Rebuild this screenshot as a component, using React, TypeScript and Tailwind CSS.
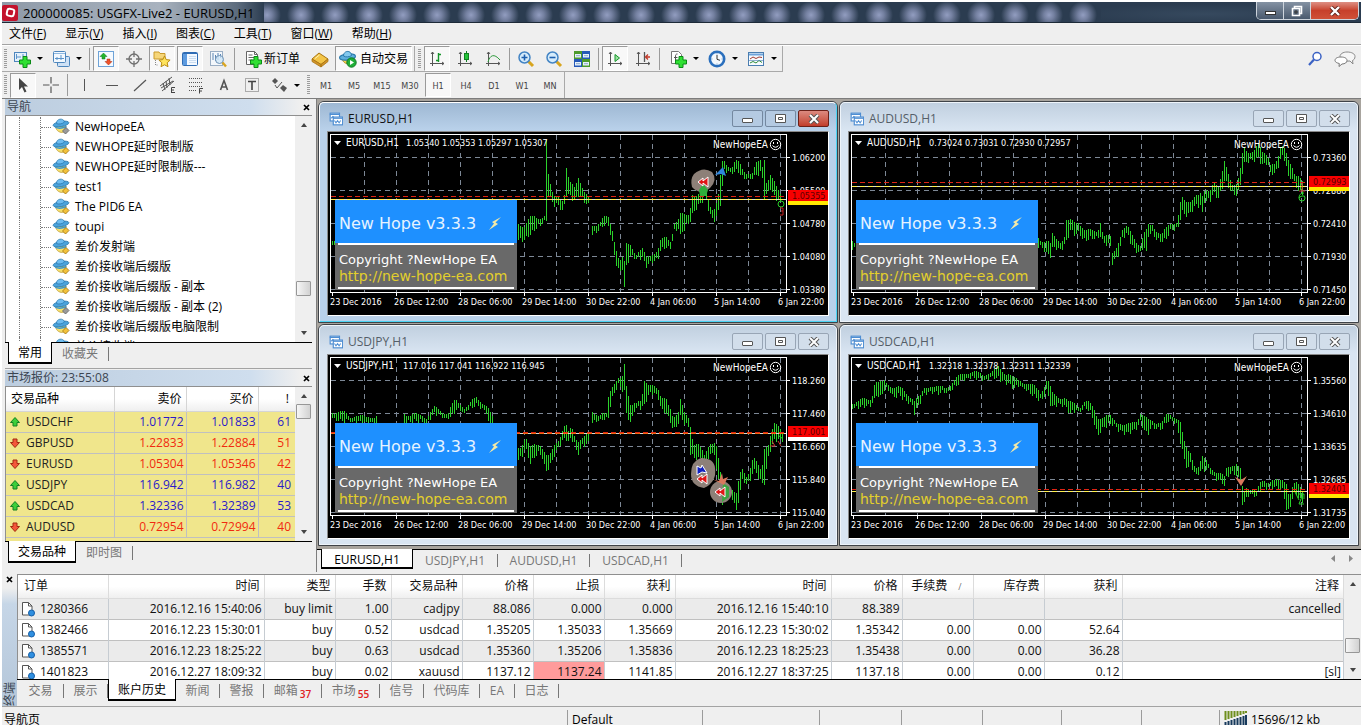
import type { ReactNode } from "react";
import clsx from "clsx";

const UI_FONT = "font-['Open_Sans','Noto_Sans_CJK_SC',sans-serif]";
const CHART_FONT = "DejaVu Sans Condensed, DejaVu Sans, sans-serif";

/* ---------- icons ---------- */

function Icon({ children, size = 18 }: { children: ReactNode; size?: number }) {
  return (
    <svg width={size} height={size} viewBox="0 0 18 18" fill="none" className="shrink-0" aria-hidden="true">
      {children}
    </svg>
  );
}

const plus = (
  <path d="M10 6.500h4V10h3.500v4H14v3.500h-4V14H6.500v-4H10z" fill="#2fe032" stroke="#0b8a16" />
);

const axes = (
  <path d="M4.500 2v14M2 13.500h14M3 4l1.500-2L6 4M14 12l2 1.500-2 1.500" stroke="#555" />
);

const ICONS: Record<string, ReactNode> = {
  newChart: (
    <>
      <rect x="1.500" y="2.500" width="12" height="9" fill="#e4f0fb" stroke="#4e86bd" />
      <path d="M3.500 4v5M3 7h5M10 4v3" stroke="#5a93c9" />
      {plus}
    </>
  ),
  profiles: (
    <>
      <rect x="5.500" y="6.500" width="12" height="10" rx="1" fill="#cfe2f6" stroke="#4e86bd" />
      <rect x="1.500" y="1.500" width="12" height="11" rx="1" fill="#f2f8fe" stroke="#4e86bd" />
      <path d="M2 3.500h11" stroke="#8db7e0" />
      <path d="M3 8.500h9M5 7v3M9 5v5" stroke="#5a93c9" />
    </>
  ),
  market: (
    <>
      <rect x="1.500" y="1.500" width="15" height="15" fill="#f5faff" stroke="#6ea3d8" />
      <path d="M6.500 3L10 6.500H8V9H5V6.500H3z" fill="#23b52c" stroke="#0f7a1a" strokeWidth=".5" />
      <path d="M11.500 15L8 11.500h2V9h3v2.500h2z" fill="#f0522a" stroke="#a92a0c" strokeWidth=".5" />
    </>
  ),
  target: (
    <>
      <circle cx="9" cy="9" r="5" stroke="#707070" strokeWidth="1.300" />
      <path d="M9 1v6M9 11v6M1 9h6M11 9h6" stroke="#707070" strokeWidth="1.300" />
    </>
  ),
  star: (
    <>
      <path d="M1 2h5l1 1.500h5V9H1z" fill="#f6d679" stroke="#c99a2c" />
      <path d="M2.500 10v5H5" stroke="#888" strokeDasharray="1 1" />
      <path d="M11.500 6l1.700 3.600 3.900.5-2.900 2.700.8 3.900-3.500-1.900L8 16.700l.8-3.900-2.900-2.700 3.900-.5z" fill="#ffe45c" stroke="#b98a12" />
    </>
  ),
  list: (
    <>
      <rect x="1.500" y="2.500" width="15" height="13" rx="1" fill="#f4f9ff" stroke="#2f6cb4" />
      <path d="M2 3.500h14" stroke="#2f6cb4" />
      <rect x="2" y="4" width="4" height="11" fill="#5d9be0" />
      <path d="M8 6.500h7M8 8.500h7M8 10.500h7M8 12.500h7" stroke="#c9dcf0" />
    </>
  ),
  tester: (
    <>
      <rect x="1.500" y="1.500" width="12" height="14" fill="#f3f7fb" stroke="#9aaec4" />
      <path d="M4 3v7M6.500 5v6M9 3v7M11.500 4v4" stroke="#5b86b5" />
      <circle cx="10.500" cy="9.500" r="4" fill="#cfe6f8" fillOpacity=".8" stroke="#6f93b6" />
      <path d="M13.500 12.500l3.500 4" stroke="#d9a520" strokeWidth="2.400" />
    </>
  ),
  order: (
    <>
      <path d="M2.500 1.500h8l3 3v10h-11z" fill="#fff" stroke="#666" />
      <path d="M10.500 1.500v3h3M4.500 5h4M4.500 7.500h6M4.500 10h4" stroke="#666" />
      {plus}
    </>
  ),
  gold: (
    <>
      <path d="M1 9l7-6 9 6-7 5.500z" fill="#f3c548" stroke="#a87410" />
      <path d="M1 9v2.500l9 5.500v-2.500zM10 14.500V17l7-5.500V9z" fill="#d2952a" stroke="#a87410" strokeWidth=".8" />
      <path d="M4 8.500l4.500-3.500" stroke="#fff2b0" />
    </>
  ),
  auto: (
    <>
      <path d="M3 7c0 7 8 10 12 1z" fill="#f1d254" stroke="#b78d1c" />
      <ellipse cx="8.500" cy="7" rx="8" ry="3" transform="rotate(-6 8.500 7)" fill="#5fb0de" stroke="#2a7aac" />
      <path d="M4.500 6c0-6 8-6 8-.5-2 1.500-6 2-8 .5z" fill="#83c9ee" stroke="#2a7aac" />
      <circle cx="12.500" cy="12.500" r="4.700" fill="#1fae37" stroke="#0e7a20" />
      <path d="M11 10l4 2.500-4 2.500z" fill="#fff" />
    </>
  ),
  bars: (
    <>
      {axes}
      <path d="M10.500 3v9M10.500 4.500H13M8 10.500h2.500" stroke="#15952a" strokeWidth="1.400" />
    </>
  ),
  candles: (
    <>
      {axes}
      <path d="M10.500 1v11" stroke="#128022" />
      <rect x="8.500" y="3.500" width="4" height="6" fill="#25c53a" stroke="#128022" />
    </>
  ),
  line: (
    <>
      {axes}
      <path d="M4 12C6 5 10 3 16 10" stroke="#2d9a3b" />
    </>
  ),
  zoomIn: (
    <>
      <path d="M11 11l5 5" stroke="#d8a51f" strokeWidth="3" />
      <circle cx="7.500" cy="7.500" r="5.500" fill="#d6ecfb" stroke="#4384c4" strokeWidth="1.500" />
      <path d="M7.500 4.500v6M4.500 7.500h6" stroke="#1d5fae" strokeWidth="1.600" />
    </>
  ),
  zoomOut: (
    <>
      <path d="M11 11l5 5" stroke="#d8a51f" strokeWidth="3" />
      <circle cx="7.500" cy="7.500" r="5.500" fill="#d6ecfb" stroke="#4384c4" strokeWidth="1.500" />
      <path d="M4.500 7.500h6" stroke="#1d5fae" strokeWidth="1.600" />
    </>
  ),
  tile: (
    <>
      <rect x="1" y="1" width="8" height="8" fill="#4d9a2c" />
      <rect x="9" y="1" width="8" height="8" fill="#2659b8" />
      <rect x="1" y="9" width="8" height="8" fill="#2659b8" />
      <rect x="9" y="9" width="8" height="8" fill="#4d9a2c" />
      <path d="M2 4h6v3.500H2zM10 4h6v3.500h-6zM2 12h6v3.500H2zM10 12h6v3.500h-6z" fill="#e8f2fa" />
      <path d="M3 5.700h4M11 5.700h4M3 13.700h4M11 13.700h4" stroke="#8ba8c8" />
    </>
  ),
  scroll: (
    <>
      {axes}
      <path d="M9 4.500l4.500 3.500L9 11.500z" fill="#9be29f" stroke="#15952a" />
    </>
  ),
  shift: (
    <>
      {axes}
      <path d="M10.500 2v10" stroke="#555" strokeWidth="1.300" />
      <path d="M16 7h-4M14 4.500L11.500 7 14 9.500" stroke="#c23a2a" strokeWidth="1.300" />
    </>
  ),
  indicators: (
    <>
      <path d="M2.500 1.500h7l3 3v9h-10z" fill="#fff" stroke="#777" />
      <path d="M8.500 4c-2 0-2 1-2 3v4M5 7.500h3.500" stroke="#555" />
      {plus}
    </>
  ),
  clock: (
    <>
      <circle cx="9" cy="9" r="7.200" fill="#f3f8fd" stroke="#2a6fbd" strokeWidth="2.600" />
      <path d="M9 5v4.300l3 1" stroke="#333" />
      <path d="M9 3.400v1M9 13.600v1M3.400 9h1M13.600 9h1" stroke="#5c8fc9" />
    </>
  ),
  template: (
    <>
      <rect x="1.500" y="2.500" width="15" height="13" fill="#f7fbff" stroke="#4a7db0" />
      <path d="M2 4.500h14" stroke="#6fa4da" strokeWidth="2" />
      <path d="M3 9l3-2 3 1.500 3-1.500 3 .5" stroke="#a03a30" />
      <path d="M3 13l3-1.500 3 1.500 3-2.500 3 2" stroke="#2e8b3a" />
      <path d="M2 10.500h14" stroke="#4a7db0" strokeWidth=".6" />
    </>
  ),
  cursor: <path d="M5 2v12l3-3 2.500 5.500 2-1L10 10.500h4z" fill="#444" />,
  cross: <path d="M9 1v6.500M9 10.500V17M1 9h6.500M10.500 9H17" stroke="#555" strokeWidth="1.200" />,
  vline: <path d="M9.500 3v12" stroke="#555" />,
  hline: <path d="M3 9.500h12" stroke="#555" />,
  trend: <path d="M3 15L15 4" stroke="#555" strokeWidth="1.200" />,
  channel: (
    <>
      <path d="M1 10L13 1M3 15L15 5M4 7l2 7M7 5l1 7M10 2l1 7M2 12l12-7" stroke="#555" />
      <path d="M12.500 17v-5.500H16M12.500 14H15M12.500 16.500H16" stroke="#444" />
    </>
  ),
  fibo: (
    <>
      <path d="M2 2.500h14M2 6.500h14M2 10.500h14M2 14.500h8" stroke="#555" strokeDasharray="1 1" />
      <path d="M12.500 17.500v-5H16M12.500 15H15" stroke="#444" />
    </>
  ),
  letterA: <path d="M5.500 14L9 4.500l3.500 9.500M6.800 11h4.400" stroke="#555" strokeWidth="1.600" />,
  label: (
    <>
      <rect x="2.500" y="2.500" width="13" height="13" stroke="#666" strokeDasharray="1 1" />
      <path d="M5 5.500h8M9 5.500V14" stroke="#444" strokeWidth="1.600" />
    </>
  ),
  arrows: (
    <>
      <path d="M2 5l3-3 3 3-3 3z" fill="#555" />
      <path d="M10 12l3-3 4 3-3 4z" fill="#555" />
      <path d="M5 9l2 3 5-6" stroke="#555" />
    </>
  ),
};

function Expert({ off }: { off?: boolean }) {
  return (
    <Icon>
      <path d="M3.500 8.500C4 13 8.500 15.500 12 14l2-6z" fill="#f5e06c" stroke="#c0a03c" strokeWidth=".8" />
      <ellipse cx="9" cy="6" rx="8" ry="2.600" transform="rotate(-10 9 6)" fill="#4ba3dc" stroke="#2b7bb0" strokeWidth=".8" />
      <path d="M4.500 5.500C4 .5 11.500-.5 12.500 4c-2 2-6 2.500-8 1.500z" fill="#6fbdf0" stroke="#2b7bb0" strokeWidth=".8" />
      <path d="M3 9c3 1.800 7 1.500 11.500-.5" stroke="#3f97cc" strokeWidth="1.400" />
      <path d="M14 9.500l3 3-3.500 3.500-3-3z" fill={off ? "#9a9a9a" : "#f2c23c"} stroke={off ? "#666" : "#a87a14"} strokeWidth=".9" />
    </Icon>
  );
}

function ChartGlyph() {
  return (
    <Icon size={14}>
      <rect x="1.500" y="1.500" width="12" height="10" fill="#fff" stroke="#4f8ed2" strokeWidth="1.500" />
      <path d="M1 3h13M3 8l2-2 2 2" stroke="#4f8ed2" strokeWidth="1.600" />
      <rect x="5.500" y="6.500" width="12" height="10" fill="#fff" stroke="#4f8ed2" strokeWidth="1.500" />
      <path d="M5 8h12" stroke="#4f8ed2" strokeWidth="1.600" />
      <path d="M7 11l2 3 2-3 2 3 2-3" stroke="#4f8ed2" strokeWidth="1.300" />
    </Icon>
  );
}

/* ---------- toolbars ---------- */

function Grip() {
  return (
    <span className="mx-[2px] h-[20px] w-[3px] shrink-0 bg-[repeating-linear-gradient(180deg,#9c9c9c_0_1px,#efefef_1px_2px)]" />
  );
}

function Sep() {
  return <span className="mx-[2px] h-[22px] w-px shrink-0 bg-[#9b9b9b]" />;
}

type ToolProps = { icon: string; label: string; pressed?: boolean; caret?: boolean };

function Tool({ icon, label, pressed, caret }: ToolProps) {
  return (
    <button
      aria-label={label}
      className={clsx(
        "flex h-[25px] shrink-0 items-center",
        caret ? "w-[39px] justify-between pl-1 pr-[5px]" : "mx-px w-[26px] justify-center",
        pressed && "border border-b-white border-l-[#9a9a9a] border-r-white border-t-[#9a9a9a] bg-[#f8f8f8]"
      )}
    >
      <Icon>{ICONS[icon]}</Icon>
      {caret && <Caret />}
    </button>
  );
}

function Caret() {
  return (
    <svg width="6" height="3" viewBox="0 0 6 3" aria-hidden="true">
      <path d="M0 0h6L3 3z" fill="#000" />
    </svg>
  );
}

const MENUS = [
  ["文件", "F"],
  ["显示", "V"],
  ["插入", "I"],
  ["图表", "C"],
  ["工具", "T"],
  ["窗口", "W"],
  ["帮助", "H"],
];

const PERIODS = ["M1", "M5", "M15", "M30", "H1", "H4", "D1", "W1", "MN"];

function TitleBar() {
  return (
    <header className="flex h-[21px] shrink-0 border-b border-[#1d2a38] bg-[#2b3c50]">
      <div className="flex w-[262px] shrink-0 items-center gap-[5px] bg-[linear-gradient(90deg,#8e9aa8,#a9b3bf_60%,#5c6b7d_90%,#2b3c50)] pt-px">
        <span className="flex size-[16px] items-center justify-center rounded-[2px] bg-[#c3122c]">
          <span className="size-[9px] rotate-12 rounded-[3px] border-2 border-white" />
        </span>
        <h1 className="whitespace-nowrap text-[13px] leading-4 text-black">200000085: USGFX-Live2 - EURUSD,H1</h1>
      </div>
      <div className="flex-1 bg-[radial-gradient(circle_at_17px_13px,#929dc0_0,#7480a0_5px,#2b3c50_14px)] bg-[length:34px_21px] bg-[position:-14px_0px]" />
      <div className="flex w-[260px] justify-end bg-[radial-gradient(ellipse_at_40%_60%,#36495e,#2b3c50_60%)] pr-[2px]">
        <div className="flex h-[18px] overflow-hidden rounded-b-[5px] border border-t-0 border-[#cdd4dc]">
          <button aria-label="最小化" className="flex w-[27px] items-center justify-center border-r border-[#cdd4dc] bg-linear-to-b from-[#8492a3] to-[#4a5a6e]">
            <span className="mt-1 h-[4px] w-[11px] border border-[#333] bg-white" />
          </button>
          <button aria-label="还原" className="flex w-[27px] items-center justify-center border-r border-[#cdd4dc] bg-linear-to-b from-[#8492a3] to-[#4a5a6e]">
            <svg width="12" height="12" viewBox="0 0 12 12" fill="none" aria-hidden="true">
              <path d="M3.500 3V1.500h7v7H9M1.500 3.500h7v7h-7z" stroke="#fff" strokeWidth="1.600" />
              <path d="M4 6h2v2H4z" stroke="#333" />
            </svg>
          </button>
          <button aria-label="关闭" className="flex w-[47px] items-center justify-center bg-linear-to-b from-[#dd8f84] via-[#c7402b] to-[#cf5138]">
            <svg width="12" height="10" viewBox="0 0 12 10" aria-hidden="true">
              <path d="M2 1l8 8M10 1L2 9" stroke="#5b2018" strokeWidth="4" />
              <path d="M2 1l8 8M10 1L2 9" stroke="#fff" strokeWidth="2.400" />
            </svg>
          </button>
        </div>
      </div>
    </header>
  );
}

function Toolbars() {
  return (
    <div className="shrink-0">
      <nav className="flex h-[22px] items-center border-b border-[#a3a3a3] pl-[7px]">
        {MENUS.map(([name, key]) => (
          <button key={key} className="mr-[19px] whitespace-nowrap text-[12px] leading-4">
            {name}(<u>{key}</u>)
          </button>
        ))}
      </nav>
      <div className="flex justify-between border-t border-white">
        <div className="flex h-[26px] items-center border-b border-r border-[#a9a9a9]">
          <Grip />
          <Tool icon="newChart" label="新图表" caret />
          <Tool icon="profiles" label="配置文件" caret />
          <Sep />
          <Tool icon="market" label="市场报价" pressed />
          <Tool icon="target" label="数据窗口" />
          <Tool icon="star" label="导航" pressed />
          <Tool icon="list" label="终端" pressed />
          <Tool icon="tester" label="策略测试" />
          <Sep />
          <button className="flex w-[69px] items-center gap-[2px] whitespace-nowrap pl-[7px] text-[12px]">
            <Icon>{ICONS.order}</Icon>新订单
          </button>
          <Tool icon="gold" label="MetaEditor" />
          <button className="mx-px flex h-[25px] w-[77px] items-center gap-[3px] whitespace-nowrap border border-b-white border-l-[#9a9a9a] border-r-white border-t-[#9a9a9a] bg-[#f8f8f8] pl-[3px] text-[12px]">
            <Icon>{ICONS.auto}</Icon>自动交易
          </button>
          <span className="mx-px h-full w-px bg-[#a9a9a9]" />
          <Grip />
          <Tool icon="bars" label="柱状图" pressed />
          <Tool icon="candles" label="蜡烛图" />
          <Tool icon="line" label="折线图" />
          <Sep />
          <Tool icon="zoomIn" label="放大" />
          <Tool icon="zoomOut" label="缩小" />
          <Tool icon="tile" label="平铺窗口" />
          <Sep />
          <Tool icon="scroll" label="自动滚动" pressed />
          <Tool icon="shift" label="图表平移" />
          <Sep />
          <div className="flex pl-[3px]">
            <Tool icon="indicators" label="指标" caret />
            <Tool icon="clock" label="周期" caret />
            <Tool icon="template" label="模板" caret />
          </div>
        </div>
        <div className="flex items-center gap-[11px] pr-[5px]">
          <button aria-label="搜索">
            <svg width="16" height="16" viewBox="0 0 16 16" fill="none" aria-hidden="true">
              <circle cx="10" cy="5.500" r="4" fill="#fff" stroke="#3b62c4" strokeWidth="1.500" />
              <path d="M7 8.500L2 14" stroke="#3b62c4" strokeWidth="2.200" />
            </svg>
          </button>
          <button aria-label="聊天">
            <svg width="22" height="16" viewBox="0 0 22 16" fill="none" aria-hidden="true">
              <path d="M13 1c5 0 8 2 8 4.500S19.500 9 18.500 9.500L19 13l-3-3c-6 .5-10-1-10-4.500C6 3 9 1 13 1z" fill="#f6f6f6" stroke="#8a8a8a" />
              <path d="M7 6c4 0 6 1.500 6 3.500S11 13 8 13l-3 2.500.3-3C3 12 1 11 1 9.500 1 7.500 3 6 7 6z" fill="#fff" stroke="#777" />
            </svg>
          </button>
        </div>
      </div>
      <div className="flex border-b border-[#7d7d7d]">
        <div className="flex h-[26px] items-center border-r border-[#a9a9a9]">
          <Grip />
          <Tool icon="cursor" label="光标" pressed />
          <Tool icon="cross" label="十字准线" />
          <Sep />
          <Tool icon="vline" label="垂直线" />
          <Tool icon="hline" label="水平线" />
          <Tool icon="trend" label="趋势线" />
          <Tool icon="channel" label="通道" />
          <Tool icon="fibo" label="斐波那契" />
          <Tool icon="letterA" label="文字" />
          <Tool icon="label" label="文字标签" />
          <Tool icon="arrows" label="箭头" caret />
          <Grip />
          {PERIODS.map((p) => (
            <button
              key={p}
              className={clsx(
                "mx-px h-[24px] w-[26px] pt-[3px] font-['DejaVu_Sans_Condensed','DejaVu_Sans',sans-serif] text-[9px] text-[#444]",
                p === "H1" && "border border-b-white border-l-[#9a9a9a] border-r-white border-t-[#9a9a9a] bg-[#f8f8f8]"
              )}
            >
              {p}
            </button>
          ))}
        </div>
      </div>
    </div>
  );
}

/* ---------- shared panel parts ---------- */

function ScrollBar({ before, after }: { before: string; after: string }) {
  return (
    <div className="flex w-[17px] shrink-0 flex-col items-center bg-[#efefef] py-[7px]">
      <svg width="6" height="4" viewBox="0 0 6 4" aria-hidden="true">
        <path d="M3 0l3 4H0z" fill="#444" />
      </svg>
      <span className={before} />
      <span className="h-[15px] w-[15px] shrink-0 rounded-[1px] border border-[#979797] bg-linear-to-r from-[#f6f6f6] to-[#d2d2d2]" />
      <span className={after} />
      <svg width="6" height="4" viewBox="0 0 6 4" aria-hidden="true">
        <path d="M0 0h6L3 4z" fill="#444" />
      </svg>
    </div>
  );
}

function PanelTitle({ children }: { children: ReactNode }) {
  return (
    <div className="flex h-[16px] shrink-0 items-center justify-between bg-[linear-gradient(90deg,#bccddf,#cfdeee_80%,#efefef_96%)] pl-[2px] pr-[2px] leading-4 text-[#3c4652]">
      <span className="text-[12px]">{children}</span>
      <button aria-label="关闭">
        <svg width="7" height="7" viewBox="0 0 7 7" aria-hidden="true">
          <path d="M1 1l5 5M6 1L1 6" stroke="#000" strokeWidth="1.700" />
        </svg>
      </button>
    </div>
  );
}

function PanelTabs({ tabs }: { tabs: string[] }) {
  return (
    <div className="flex h-[25px] shrink-0 items-start border-t border-black pl-[3px] text-[12px]">
      {tabs.map((t, i) =>
        i === 0 ? (
          <button key={t} className="-mt-px h-[22px] border-x border-b-2 border-black bg-white px-[9px] pt-[2px]">
            {t}
          </button>
        ) : (
          <button key={t} className="mt-[4px] h-[14px] border-r border-[#777] px-[10px] leading-3 text-[#777]">
            {t}
          </button>
        )
      )}
    </div>
  );
}

/* ---------- left column ---------- */

const EXPERTS = [
  { name: "NewHopeEA", off: true },
  { name: "NEWHOPE延时限制版" },
  { name: "NEWHOPE延时限制版---" },
  { name: "test1" },
  { name: "The PID6 EA" },
  { name: "toupi" },
  { name: "差价发射端" },
  { name: "差价接收端后缀版" },
  { name: "差价接收端后缀版 - 副本" },
  { name: "差价接收端后缀版 - 副本 (2)", off: true },
  { name: "差价接收端后缀版电脑限制" },
  { name: "差价接收端" },
];

function Navigator() {
  return (
    <section className="mb-px flex h-[268px] shrink-0 flex-col">
      <PanelTitle>导航</PanelTitle>
      <div className="flex min-h-0 flex-1 border-l border-t border-[#8f8f8f] bg-white">
        <ul className="flex-1 overflow-hidden pt-px">
          {EXPERTS.map(({ name, off }) => (
            <li key={name} className="flex h-[20px] items-center whitespace-nowrap text-[12px] leading-5 text-black">
              <span className="ml-[13px] h-full w-[21px] border-l border-dotted border-[#777]" />
              <span className="flex h-full w-[12px] items-center border-l border-dotted border-[#777]">
                <span className="w-[10px] border-t border-dotted border-[#777]" />
              </span>
              <Expert off={off} />
              <span className="ml-[5px]">{name}</span>
            </li>
          ))}
        </ul>
        <ScrollBar before="flex-[155]" after="flex-[35]" />
      </div>
      <PanelTabs tabs={["常用", "收藏夹"]} />
    </section>
  );
}

const QUOTES = [
  { symbol: "USDCHF", bid: "1.01772", ask: "1.01833", spread: 61, up: true },
  { symbol: "GBPUSD", bid: "1.22833", ask: "1.22884", spread: 51, up: false },
  { symbol: "EURUSD", bid: "1.05304", ask: "1.05346", spread: 42, up: false },
  { symbol: "USDJPY", bid: "116.942", ask: "116.982", spread: 40, up: true },
  { symbol: "USDCAD", bid: "1.32336", ask: "1.32389", spread: 53, up: true },
  { symbol: "AUDUSD", bid: "0.72954", ask: "0.72994", spread: 40, up: false },
];

function MarketWatch() {
  return (
    <section className="flex min-h-0 flex-1 flex-col border-t border-[#a3a3a3] pt-px">
      <PanelTitle>市场报价: 23:55:08</PanelTitle>
      <div className="flex h-[155px] shrink-0 border-l border-t border-[#8f8f8f]">
        <div className="flex-1 overflow-hidden bg-[#f0e68c]">
          <table className="w-full table-fixed border-collapse text-right text-[12px] leading-4">
            <thead>
              <tr className="h-[24px] bg-linear-to-b from-white from-50% to-[#efefef]">
                <th className="w-[108px] border-b border-r border-[#d5d5d5] pl-[5px] text-left font-normal">交易品种</th>
                <th className="w-[72px] border-b border-r border-[#d5d5d5] pr-1 font-normal">卖价</th>
                <th className="w-[72px] border-b border-r border-[#d5d5d5] pr-1 font-normal">买价</th>
                <th className="border-b border-[#d5d5d5] pr-[6px] font-normal">!</th>
              </tr>
            </thead>
            <tbody>
              {QUOTES.map((q) => (
                <tr key={q.symbol} className={clsx("h-[21px] border-b border-[#c0c0c0]", q.up ? "text-[#2a1ac8]" : "text-[#f02a10]")}>
                  <td className="border-r border-[#c0c0c0] pl-[4px] text-left text-[#222]">
                    <span className="flex items-center gap-[6px]">
                      <svg width="10" height="10" viewBox="0 0 10 10" aria-hidden="true">
                        {q.up ? (
                          <path d="M5 .5L9.500 5.500H7v3.500H3V5.500H.5z" fill="#3ccf3a" stroke="#128022" />
                        ) : (
                          <path d="M5 9.500L.5 4.500H3V1h4v3.500h2.500z" fill="#f4573a" stroke="#a32a10" />
                        )}
                      </svg>
                      {q.symbol}
                    </span>
                  </td>
                  <td className="border-r border-[#c0c0c0] pr-[2px]">{q.bid}</td>
                  <td className="border-r border-[#c0c0c0] pr-[2px]">{q.ask}</td>
                  <td className="pr-[4px]">{q.spread}</td>
                </tr>
              ))}
            </tbody>
          </table>
        </div>
        <ScrollBar before="h-[6px]" after="flex-1" />
      </div>
      <PanelTabs tabs={["交易品种", "即时图"]} />
    </section>
  );
}

/* ---------- charts ---------- */

// "x high low" triples, "|" starts a new run after a gap
const EURUSD =
  "2 106 112 6 107 110|190 91 108 196 94 108 201 86 103 208 85 96 216 84 89 218 9 89 220 44 63 223 59 69 226 64 73 230 63 73 234 68 79 236 63 73 238 38 63 241 51 63 246 54 69 250 44 63 254 56 66 257 63 71 261 68 74|264 94 103 269 91 99 275 86 93 280 86 93 284 98 111 287 113 129 291 129 141 294 126 136 296 131 157 298 113 133 303 113 123 307 121 126 314 118 126 318 126 134 324 121 129 329 119 128 332 109 119 337 106 115 342 108 116 346 91 99 350 88 96 352 83 104 358 83 93 361 81 91 364 61 83 369 66 74 373 59 71 377 49 63 381 71 81 385 79 89 389 69 84 391 59 76 393 31 68 395 28 39 399 33 39 404 34 41 407 29 38 411 31 41 415 39 46 424 41 46 427 33 44 432 29 41 434 34 46 436 26 66 438 49 63 442 43 56 445 49 63 449 58 68 453 63 70";
const AUDUSD =
  "3 107 116 5 109 116|189 106 114 194 108 116 198 109 123 201 113 124 203 103 116 208 108 116 211 109 118 215 104 113 217 88 109 221 89 98 226 91 103 229 89 101 236 99 109 241 99 106 248 99 106 251 89 104 254 104 111 261 106 114 263 121 131 266 116 128 269 109 123 273 98 106 278 95 101 282 101 113 286 108 118 291 113 121 294 104 114 297 99 121 299 93 103 303 92 101 308 99 108 312 103 109 316 98 108 321 91 99 328 89 96 330 76 93 332 65 79 336 71 83 341 69 81 346 62 73 351 63 74 353 66 81 355 61 69 361 56 68 364 49 61 369 56 66 373 41 56 375 30 48 378 38 53 383 51 61 388 53 63 391 38 53 394 14 33 398 19 29 404 19 28 409 13 26 413 21 33 418 21 31 421 31 41 426 33 41 429 26 34 432 13 24 436 16 28 439 26 46 443 36 46 446 46 54 449 46 58 453 48 62";
const USDJPY =
  "4 56 62 8 57 65 15 58 66 23 61 65 35 62 68 41 61 68 48 62 69|76 59 68 85 59 66 91 61 66 98 62 68 103 55 62 106 52 58 111 57 61 120 57 62 123 50 62 127 46 55 131 50 55 136 52 57 141 48 53 148 44 50 153 46 52 158 50 57 160 53 68 165 65 69|188 93 107 193 90 102 197 82 93 202 93 108 206 90 102 211 88 97 215 93 105 217 100 117 221 102 112 225 92 102 228 87 97 231 82 90 235 72 85 237 69 82 240 78 87 243 73 83 246 80 88 249 85 100 253 83 92 260 80 88|264 57 68 266 58 67 271 59 64 278 60 64 280 43 62 283 33 45 287 25 35 290 22 30 293 23 33 294 22 35 296 11 37 298 33 58 302 50 68 306 46 55 310 46 52 313 48 53 316 28 50 320 30 40 325 28 37 330 35 43 333 45 55 338 45 58 342 52 67 345 62 75 350 58 68 352 46 62 356 58 68 360 62 72 362 70 98 365 88 103 371 92 103 376 100 108 381 87 100 386 88 98 388 92 115 391 112 132 394 132 150 398 128 138 403 132 142 406 138 147 408 140 157 411 122 142 413 113 125 418 120 128 421 115 128 425 102 115 428 108 118 433 117 128 436 92 128 440 88 102 443 78 92 446 70 85 450 72 85 455 77 85";
const USDCAD =
  "3 47 52 11 45 52 16 45 51 22 44 50 25 28 45 27 26 40 31 28 42 36 27 33 41 30 37 44 32 43 49 32 40 56 38 45 62 41 48 65 45 58 71 42 47 74 34 40 81 30 36 89 33 38 96 32 37 104 27 33 111 20 27 116 17 23 122 17 22 131 19 24 139 18 23 144 17 22 149 12 23 154 17 27 159 18 28 163 23 33 171 25 30 177 28 35 186 33 42 191 37 45 194 32 43 197 26 35 200 27 45 202 38 52 209 42 49 216 42 51 220 48 58 226 49 55 231 51 55 236 46 52 241 50 57 244 53 65 248 62 80 254 62 73 262 62 68 269 67 75 276 72 78 282 68 77 287 65 73 291 58 67 294 62 73 298 65 80 302 65 72 312 68 74 317 61 67 322 59 65 327 62 68 331 68 87 334 85 100 338 95 115 341 97 108 346 112 121 349 112 118 353 103 115 359 108 115 366 117 123 375 122 130 377 113 123 382 109 117 387 110 120 391 115 128 393 132 148 394 138 152 397 132 142 402 133 138 407 137 142 412 127 133 422 125 132 429 127 133 434 125 135 437 127 155 440 142 157 442 133 145 446 128 137 451 133 145 454 136 148";

const DATES = [
  "23 Dec 2016",
  "26 Dec 12:00",
  "28 Dec 06:00",
  "29 Dec 14:00",
  "30 Dec 22:00",
  "4 Jan 06:00",
  "5 Jan 14:00",
  "6 Jan 22:00",
];

function barsPath(data: string) {
  let d = "";
  for (const run of data.split("|")) {
    const n = run.split(" ").map(Number);
    const pts: number[][] = [];
    for (let i = 0; i < n.length; i += 3) pts.push(n.slice(i, i + 3));
    let k = 0;
    for (let x = pts[0][0]; x <= pts[pts.length - 1][0]; x += 2) {
      while (k < pts.length - 2 && pts[k + 1][0] <= x) k++;
      const [x0, h0, l0] = pts[k];
      const [x1, h1, l1] = pts[k + 1];
      const t = Math.min(1, (x - x0) / (x1 - x0));
      const wobble = Math.round(Math.sin(x * 12.9) * 2);
      const high = Math.round(h0 + (h1 - h0) * t) + wobble;
      const low = Math.max(high + 4, Math.round(l0 + (l1 - l0) * t) - Math.round(Math.cos(x * 7.3) * 2));
      d += `M${x + 0.5} ${high}V${low}`;
    }
  }
  return d;
}

type Chart = {
  symbol: string;
  ohlc: string;
  ohlcX: number;
  prices: string[];
  bars: string;
  ask: number;
  bid: number;
  price: string;
  boxY: number;
  under: string;
  active?: boolean;
  marks?: ReactNode;
};

const sellMark = (x: number, y: number) => (
  <path d={`M${x - 5} ${y}l5-4v3l5-4v10l-5-4v3z`} fill="#e01515" stroke="#fff" />
);

const CHARTS: Chart[] = [
  {
    symbol: "EURUSD,H1",
    ohlc: "1.05340 1.05353 1.05297 1.05307",
    ohlcX: 78,
    prices: ["1.06200", "1.05500", "1.04780", "1.04080", "1.03380"],
    bars: EURUSD,
    ask: 64,
    bid: 67,
    price: "1.05355",
    boxY: 58,
    under: "#ffe800",
    active: true,
    marks: (
      <>
        <path d="M366 42q9-8 18-2 6 8-2 16-10 8-18-1-2-8 2-13z" fill="#8d8078" />
        <path d="M371 58l4-6 5 6-2 6h-6z" fill="#2fae3c" />
        {sellMark(375, 50)}
        <path d="M387 43l8-8 3 9-5-2z" fill="#2f86dc" />
        <circle cx="453" cy="72" r="3" stroke="#28d028" fill="none" />
        <path d="M452 76h3v3h-2M455 79v4h-3" stroke="#c02020" fill="none" />
      </>
    ),
  },
  {
    symbol: "AUDUSD,H1",
    ohlc: "0.73024 0.73031 0.72930 0.72957",
    ohlcX: 80,
    prices: ["0.73360", "0.72880", "0.72410", "0.71930", "0.71450"],
    bars: AUDUSD,
    ask: 50,
    bid: 54,
    price: "0.72993",
    boxY: 44,
    under: "#ffe800",
    marks: (
      <>
        <path d="M453 51v8M450 59h6" stroke="#d03030" />
        <path d="M455 61q-5 0-5 5 0 3 3 3t3-3-3-2-3 2" stroke="#28d028" fill="none" />
      </>
    ),
  },
  {
    symbol: "USDJPY,H1",
    ohlc: "117.016 117.041 116.922 116.945",
    ohlcX: 75,
    prices: ["118.260", "117.460", "116.660", "115.840", "115.040"],
    bars: USDJPY,
    ask: 77,
    bid: 78,
    price: "117.001",
    boxY: 71,
    under: "#ffffff",
    marks: (
      <>
        <path d="M373 103q13 0 14 10 2 14-11 20-13-2-13-14 0-13 10-16z" fill="#8d8078" />
        <circle cx="393" cy="137" r="11" fill="#8d8078" />
        <path d="M395 128l6 4v10l-7 5z" fill="#3aa540" />
        <path d="M369 111l4 2 1-3 5 8-5-1-5 3z" fill="#1020c0" stroke="#fff" />
        {sellMark(374, 124)}
        {sellMark(392, 137)}
        <path d="M386 125l5 1 3-8 1 6 5-2-4 8z" fill="#d9785c" />
        <path d="M444 86l3 5h-5M450 86l3 5" stroke="#d03030" fill="none" />
        <path d="M450 80l5 4" stroke="#28d028" />
      </>
    ),
  },
  {
    symbol: "USDCAD,H1",
    ohlc: "1.32318 1.32378 1.32311 1.32339",
    ohlcX: 80,
    prices: ["1.35560", "1.34610", "1.33635", "1.32685", "1.31735"],
    bars: USDCAD,
    ask: 134,
    bid: 136,
    price: "1.32401",
    boxY: 128,
    under: "#ffe800",
    marks: (
      <>
        <path d="M386 122l6 3 6-4-6 10z" fill="#d9785c" />
        <path d="M446 137l4 8M450 139h5v5M454 139l-4 10h5" stroke="#28d028" fill="none" />
      </>
    ),
  },
];

function Plot({ chart }: { chart: Chart }) {
  const cols = Array.from({ length: 15 }, (_, i) => 4 + i * 32);
  const rows = [25, 58, 91, 124, 157];
  return (
    <svg width="501" height="181" viewBox="0 0 501 181" fontFamily={CHART_FONT} fontSize="9" fill="#fff" shapeRendering="crispEdges">
      <g stroke="#7d8896" strokeDasharray="5 4" fill="none">
        {cols.slice(1).map((x) => (
          <path key={x} d={`M${x + 0.5} 3V160`} />
        ))}
        {rows.map((y) => (
          <path key={y} d={`M3 ${y + 0.5}H458`} />
        ))}
      </g>
      <path d={barsPath(chart.bars)} stroke="#2bd22b" fill="none" />
      <path d={`M3 ${chart.ask + 0.5}H458`} stroke="#e02414" strokeDasharray="5 3" />
      <path d={`M3 ${chart.bid + 0.5}H458`} stroke="#d8d8d8" />
      <path d={`M3 ${chart.bid + 0.5}H458`} stroke={chart.under === "#ffffff" ? "#f06a10" : "#fff04a"} strokeDasharray="5 3" />
      <g shapeRendering="auto">{chart.marks}</g>
      <rect x="2.500" y="2.500" width="456" height="158" fill="none" stroke="#fff" />
      <path d={cols.filter((_, i) => i % 2 === 0).map((x) => `M${x + 0.5} 160v4`).join("")} stroke="#fff" />
      <path d={rows.map((y) => `M458 ${y + 0.5}h4`).join("")} stroke="#fff" />
      <path d="M6 9h7l-3.500 4z" shapeRendering="auto" />
      <text x="18" y="14" fontSize="10">{chart.symbol}</text>
      <text x={chart.ohlcX} y="14">{chart.ohlc}</text>
      <text x="440" y="16" fontSize="10" textAnchor="end">NewHopeEA</text>
      <g fill="none" stroke="#fff" shapeRendering="auto">
        <circle cx="447.500" cy="12.500" r="5.200" />
        <path d="M444.500 13.500q3 3.500 6 0M445.500 10v2M449.500 10v2" />
      </g>
      {chart.prices.map((p, i) => (
        <text key={p} x="464" y={rows[i] + 4}>
          {p}
        </text>
      ))}
      {DATES.map((d, i) => (
        <text key={d} x={2 + i * 64} y="173">
          {d}
        </text>
      ))}
      <rect x="460" y={chart.boxY} width="41" height="15" fill={chart.under} />
      <rect x="460" y={chart.boxY} width="41" height="11" fill="#f80000" />
      <text x="464" y={chart.boxY + 9} fill="#5a0000">
        {chart.price}
      </text>
    </svg>
  );
}

function ChartWindow({ chart }: { chart: Chart }) {
  const { active } = chart;
  const box = "flex h-[17px] w-[31px] items-center justify-center rounded-[2px] border";
  const boxTone = active ? "border-[#7488a0] bg-[#b4cae2]" : "border-[#98a5b5] bg-[#d2deeb]";
  return (
    <article
      className={clsx(
        "flex min-w-0 flex-col rounded-t-[6px] border border-[#3f4348]",
        active ? "bg-[linear-gradient(180deg,#9db7d2,#b9d1ea_28px)]" : "bg-[linear-gradient(180deg,#c0cfdf,#d9e5f2_28px)]"
      )}
    >
      <div className={clsx("flex flex-1 flex-col rounded-t-[5px] border px-[7px] pb-[5px]", active ? "border-b-[#4cd4f4] border-l-white border-r-[#4cd4f4] border-t-white" : "border-[#eef4fa]")}>
        <div className="flex h-[28px] items-center justify-between pl-[2px] pt-[3px]">
          <h2 className={clsx("flex items-center gap-[5px] text-[12px] leading-4", active ? "text-[#111]" : "text-[#555e68]")}>
            <ChartGlyph />
            {chart.symbol}
          </h2>
          <div className="flex gap-[2px]">
            <button aria-label="最小化" className={clsx(box, boxTone)}>
              <span className="mt-[3px] h-[5px] w-[11px] rounded-[1px] border border-[#555] bg-white" />
            </button>
            <button aria-label="最大化" className={clsx(box, boxTone)}>
              <svg width="11" height="9" viewBox="0 0 11 9" fill="none" aria-hidden="true">
                <path d="M.5.500h10v8H.5z" fill="#fff" stroke="#555" />
                <path d="M3.500 3.500h4v2h-4z" stroke="#555" />
              </svg>
            </button>
            <button aria-label="关闭" className={clsx(box, active ? "border-[#6b2018] bg-linear-to-b from-[#dc8a80] to-[#c13c2a]" : boxTone)}>
              <svg width="12" height="10" viewBox="0 0 12 10" aria-hidden="true">
                <path d="M2 1l8 8M10 1L2 9" stroke="#555" strokeWidth="4" />
                <path d="M2 1l8 8M10 1L2 9" stroke="#fff" strokeWidth="2" />
              </svg>
            </button>
          </div>
        </div>
        <div className="relative flex-1 overflow-hidden border border-b-white border-l-[#8a8a8a] border-r-white border-t-[#8a8a8a] bg-black">
          <Plot chart={chart} />
          <div className="absolute left-[7px] top-[68px] w-[182px] bg-[#696969] font-['DejaVu_Sans',sans-serif] text-white">
            <div className="flex h-[43px] items-center gap-[12px] bg-[#1e90ff] pl-[4px] pt-[4px] text-[16px] leading-5">
              <span className="whitespace-nowrap text-[#e6f3ff]">New Hope v3.3.3</span>
              <svg width="14" height="13" viewBox="0 0 14 13" aria-hidden="true">
                <path d="M13 0L4 5l2 1.500L1 13l9-6-2.500-1.500z" fill="#f3e9a8" />
              </svg>
            </div>
            <div className="mx-[3px] border-y-2 border-white pb-[2px] pt-[6px] leading-[17px]">
              <p className="whitespace-nowrap pl-px text-[13px]">Copyright ?NewHope EA</p>
              <p className="whitespace-nowrap pl-px text-[14px] text-[#e3cf2c]">http://new-hope-ea.com</p>
            </div>
            <div className="h-px" />
          </div>
        </div>
      </div>
    </article>
  );
}

const WINDOW_TABS = [
  { symbol: "USDJPY,H1", width: "w-[85px]" },
  { symbol: "AUDUSD,H1", width: "w-[92px]" },
  { symbol: "USDCAD,H1", width: "w-[92px]" },
];

function Workspace() {
  return (
    <main className="flex min-w-0 flex-1 flex-col border-l border-[#7d7d7d]">
      <div className="grid flex-1 grid-cols-2 grid-rows-2 gap-px bg-[#a8a49e] pb-[3px] pl-px pr-[2px] pt-[2px]">
        {CHARTS.map((c) => (
          <ChartWindow key={c.symbol} chart={c} />
        ))}
      </div>
      <div className="flex h-[23px] items-start border-t border-black pl-[4px] text-[12px]">
        <button className="-mt-px h-[20px] w-[92px] border-x border-b-2 border-black bg-white pt-[2px]">EURUSD,H1</button>
        {WINDOW_TABS.map(({ symbol, width }) => (
          <button key={symbol} className={clsx("mt-[4px] h-[13px] border-r border-[#777] leading-3 text-[#777]", width)}>
            {symbol}
          </button>
        ))}
        <div className="ml-auto flex gap-[14px] pr-[8px] pt-[5px]">
          <button aria-label="向左">
            <svg width="4" height="7" viewBox="0 0 4 7" aria-hidden="true">
              <path d="M4 0v7L0 3.500z" fill="#888" />
            </svg>
          </button>
          <button aria-label="向右">
            <svg width="4" height="7" viewBox="0 0 4 7" aria-hidden="true">
              <path d="M0 0v7l4-3.500z" fill="#888" />
            </svg>
          </button>
        </div>
      </div>
    </main>
  );
}

/* ---------- terminal ---------- */

const COLUMNS: [string, string][] = [
  ["订单", "w-[90px]"],
  ["时间", "w-[156px]"],
  ["类型", "w-[71px]"],
  ["手数", "w-[56px]"],
  ["交易品种", "w-[71px]"],
  ["价格", "w-[71px]"],
  ["止损", "w-[71px]"],
  ["获利", "w-[71px]"],
  ["时间", "w-[156px]"],
  ["价格", "w-[71px]"],
  ["手续费", "w-[71px]"],
  ["库存费", "w-[71px]"],
  ["获利", "w-[78px]"],
  ["注释", ""],
];

const ORDERS = [
  ["1280366", "2016.12.16 15:40:06", "buy limit", "1.00", "cadjpy", "88.086", "0.000", "0.000", "2016.12.16 15:40:10", "88.389", "", "", "", "cancelled"],
  ["1382466", "2016.12.23 15:30:01", "buy", "0.52", "usdcad", "1.35205", "1.35033", "1.35669", "2016.12.23 15:30:02", "1.35342", "0.00", "0.00", "52.64", ""],
  ["1385571", "2016.12.23 18:25:22", "buy", "0.63", "usdcad", "1.35360", "1.35206", "1.35836", "2016.12.23 18:25:23", "1.35438", "0.00", "0.00", "36.28", ""],
  ["1401823", "2016.12.27 18:09:32", "buy", "0.02", "xauusd", "1137.12", "1137.24", "1141.85", "2016.12.27 18:37:25", "1137.18", "0.00", "0.00", "0.12", "[sl]"],
];

const TERMINAL_TABS: { name: string; count?: number; width: string }[] = [
  { name: "交易", width: "w-[46px]" },
  { name: "展示", width: "w-[44px]" },
  { name: "账户历史", width: "w-[68px]" },
  { name: "新闻", width: "w-[44px]" },
  { name: "警报", width: "w-[44px]" },
  { name: "邮箱", count: 37, width: "w-[58px]" },
  { name: "市场", count: 55, width: "w-[58px]" },
  { name: "信号", width: "w-[44px]" },
  { name: "代码库", width: "w-[56px]" },
  { name: "EA", width: "w-[35px]" },
  { name: "日志", width: "w-[44px]" },
];

function Terminal() {
  return (
    <section className="flex h-[135px] shrink-0 border-b border-[#a3a3a3] pt-[2px]">
      <div className="flex w-[15px] shrink-0 flex-col items-center justify-between bg-[linear-gradient(180deg,#efefef_14px,#c6d6e7_30px,#b4c6d9)] pt-[2px]">
        <button aria-label="关闭">
          <svg width="7" height="7" viewBox="0 0 7 7" className="block" aria-hidden="true">
            <path d="M1 1l5 5M6 1L1 6" stroke="#000" strokeWidth="1.700" />
          </svg>
        </button>
        <span className="rotate-180 text-[12px] leading-[14px] text-[#3c4652] [text-orientation:sideways] [writing-mode:vertical-rl]">终端</span>
      </div>
      <div className="flex min-w-0 flex-1 flex-col">
        <div className="flex h-[105px] shrink-0 border-l border-t border-[#8f8f8f]">
          <div className="min-w-0 flex-1 overflow-hidden">
            <table className="w-full table-fixed border-collapse bg-white text-right text-[12px] leading-4 text-[#111]">
              <thead>
                <tr className="h-[23px] bg-linear-to-b from-white from-50% to-[#efefef]">
                  {COLUMNS.map(([name, width], i) => (
                    <th key={i} className={clsx("whitespace-nowrap border-b border-r border-[#dcdcdc] font-normal", width, i === 0 ? "pl-[6px] text-left" : "pr-1")}>
                      {name}
                      {name === "手续费" && <span className="ml-[11px] mr-[7px] text-[9px] leading-none text-[#777]">/</span>}
                    </th>
                  ))}
                </tr>
              </thead>
              <tbody>
                {ORDERS.map((row, r) => (
                  <tr key={row[0]} className={clsx("h-[21px] border-b border-[#c0c0c0]", r % 2 === 0 && "bg-[#ebebeb]")}>
                    {row.map((cell, i) => (
                      <td
                        key={i}
                        className={clsx(
                          "whitespace-nowrap border-r border-[#c6ccd2] pr-[2px]",
                          i === 0 && "pl-[3px] text-left",
                          cell === "1137.24" && "bg-[#ff9b9b]"
                        )}
                      >
                        {i === 0 ? (
                          <span className="flex items-center gap-[5px]">
                            <svg width="14" height="16" viewBox="0 0 14 16" aria-hidden="true">
                              <path d="M1.500 1.500h6l3.500 3.500v9H1.500z" fill="#fff" stroke="#555" />
                              <path d="M7.500 1.500V5H11" fill="none" stroke="#555" />
                              <circle cx="10.500" cy="12" r="3" fill="#2f8fe0" stroke="#165fa8" />
                            </svg>
                            {cell}
                          </span>
                        ) : (
                          cell
                        )}
                      </td>
                    ))}
                  </tr>
                ))}
              </tbody>
            </table>
          </div>
          <ScrollBar before="flex-[52]" after="flex-[15]" />
        </div>
        <div className="flex h-[24px] items-start border-t border-black pl-px text-[12px]">
          {TERMINAL_TABS.map(({ name, count, width }) =>
            name === "账户历史" ? (
              <button key={name} className={clsx("-mt-px h-[22px] shrink-0 border-x border-b-2 border-black bg-white pt-[2px]", width)}>
                {name}
              </button>
            ) : (
              <button key={name} className={clsx("mt-[4px] h-[14px] shrink-0 whitespace-nowrap border-r border-[#777] leading-3 text-[#777]", width)}>
                {name}
                {count && <sub className="ml-[2px] text-[10px] font-semibold text-[#e02020]">{count}</sub>}
              </button>
            )
          )}
        </div>
      </div>
    </section>
  );
}

function StatusBar() {
  const cell = "h-full shrink-0 border-l border-[#9b9b9b] pl-[4px]";
  return (
    <footer className="flex h-[18px] shrink-0 overflow-hidden pt-[3px] text-[12px] leading-5">
      <span className="flex-1 pl-[2px]">导航页</span>
      <span className={clsx(cell, "w-[135px]")}>Default</span>
      <span className={clsx(cell, "w-[117px]")} />
      <span className={clsx(cell, "w-[82px]")} />
      <span className={clsx(cell, "w-[81px]")} />
      <span className={clsx(cell, "w-[79px]")} />
      <span className={clsx(cell, "w-[80px]")} />
      <span className={clsx(cell, "w-[78px]")} />
      <span className={clsx(cell, "flex w-[142px] gap-[4px] whitespace-nowrap")}>
        <svg width="23" height="15" viewBox="0 0 23 15" aria-hidden="true">
          <path d="M1.500 1v9M4.500 1v8M7.500 1v7M10.500 1v6M13.500 1v5M16.500 1v4M19.500 1v3M22 1v2" stroke="#6f8f1e" strokeWidth="2" />
          <path d="M1.500 12v3M4.500 11v4M7.500 10v5M10.500 9v6M13.500 8v7M16.500 7v8M19.500 6v9M22 5v10" stroke="#173a5c" strokeWidth="2" />
        </svg>
        15696/12 kb
      </span>
    </footer>
  );
}

export default function App() {
  return (
    <div className={clsx("h-screen overflow-hidden bg-white px-[2px] pt-[2px] text-black", UI_FONT)}>
      <div className="flex h-full flex-col bg-[#efefef]">
        <TitleBar />
        <Toolbars />
        <div className="flex min-h-0 flex-1">
          <aside className="flex w-[314px] shrink-0 flex-col pl-[3px] pr-[4px]">
            <Navigator />
            <MarketWatch />
          </aside>
          <Workspace />
        </div>
        <Terminal />
        <StatusBar />
      </div>
    </div>
  );
}
